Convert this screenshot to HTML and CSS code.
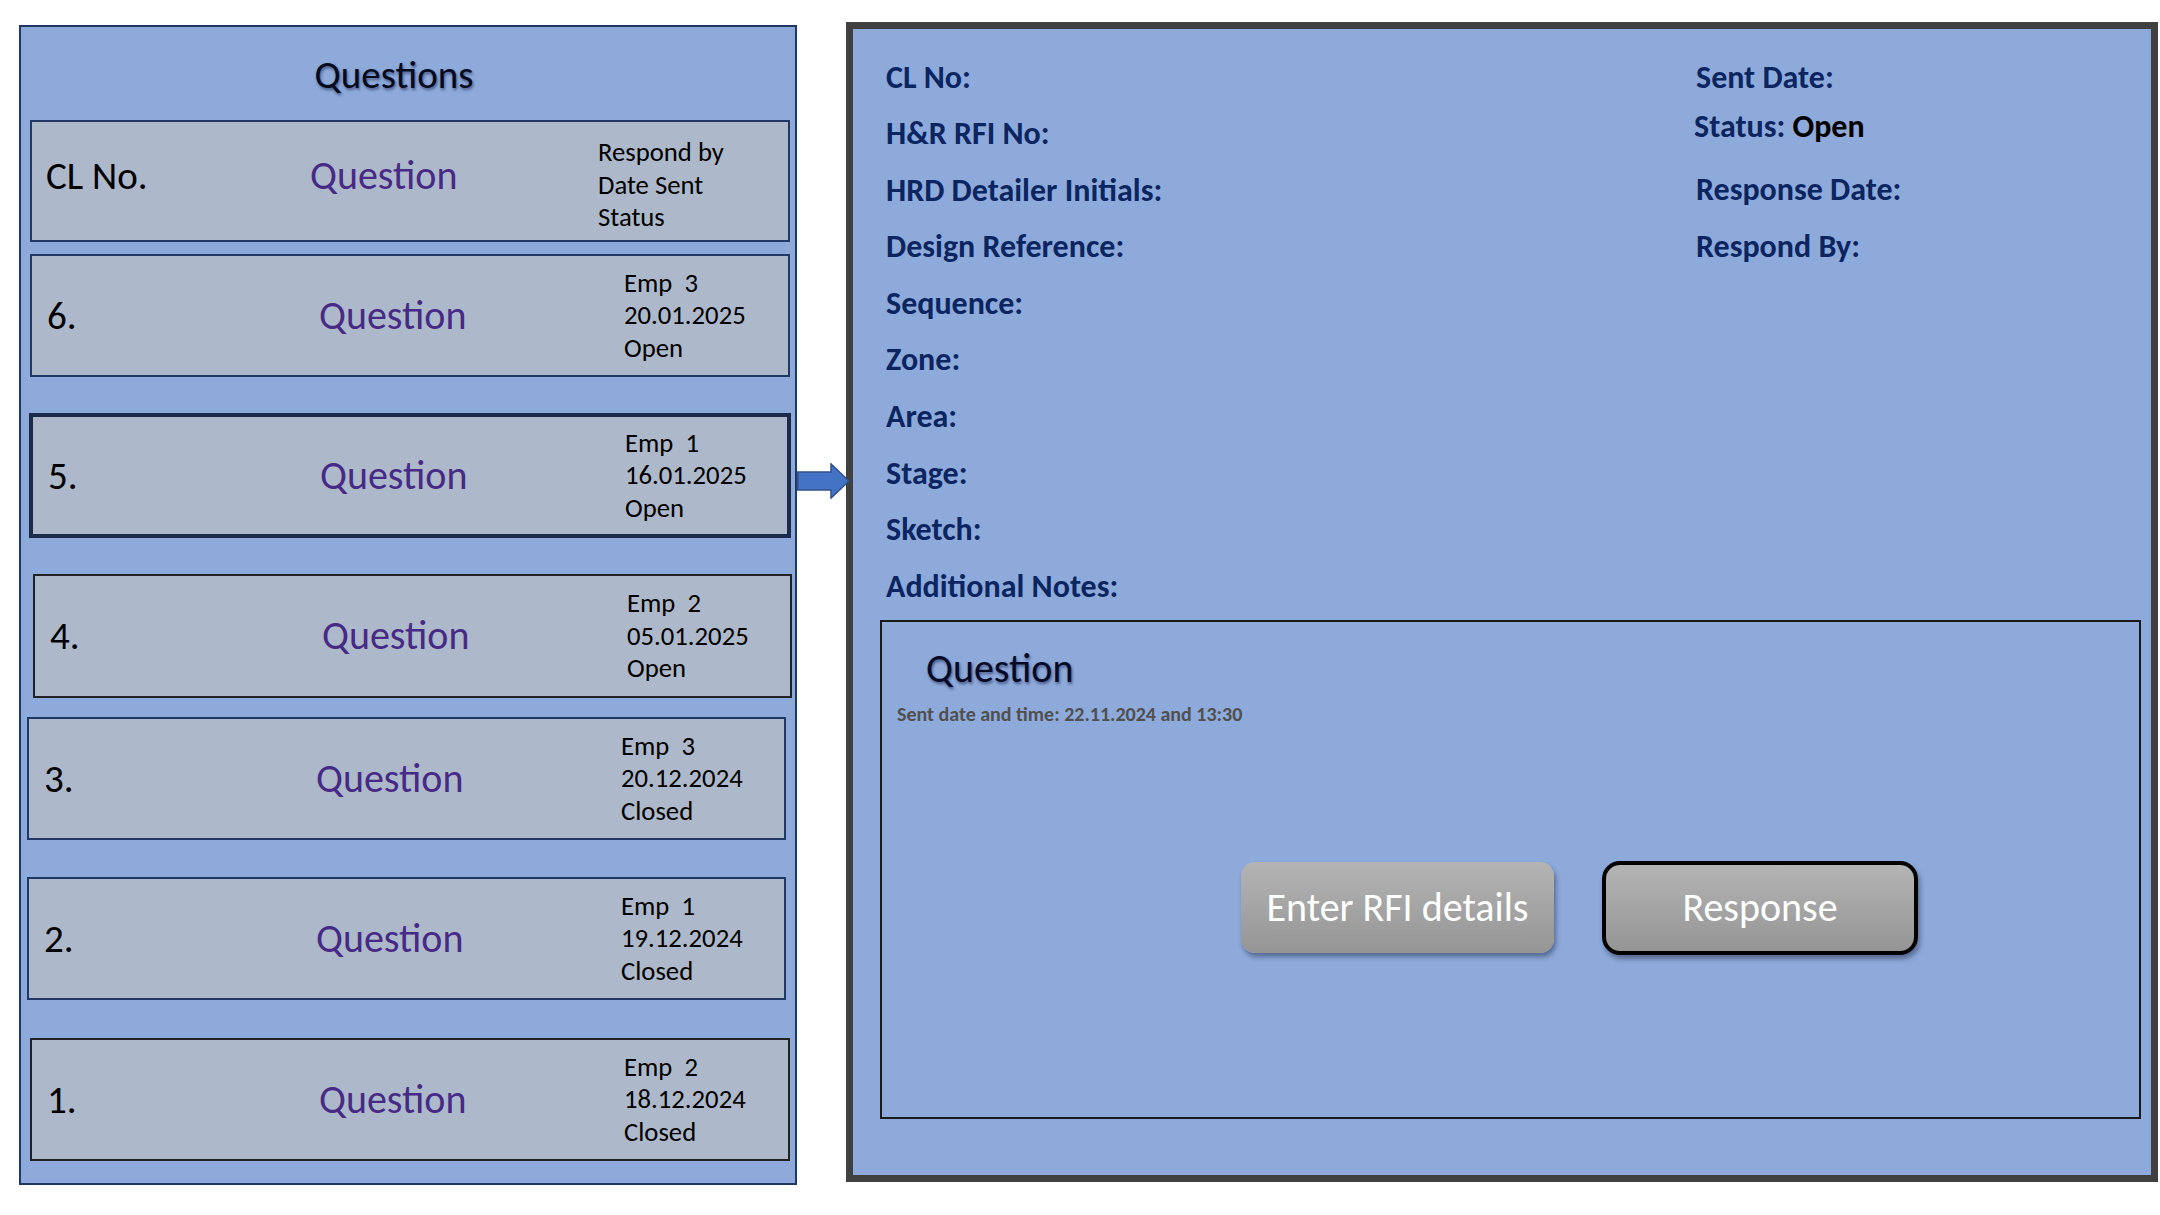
FILE: index.html
```html
<!DOCTYPE html>
<html lang="en">
<head>
<meta charset="utf-8">
<title>RFI Questions</title>
<link rel="stylesheet" href="styles.css">
</head>
<body>
<div class="page">
  <section class="list">
    <h1 class="list-title">Questions</h1>
    <div class="row head">
      <span class="num">CL No.</span>
      <span class="q">Question</span>
      <div class="meta"><span>Respond by</span><span>Date Sent</span><span>Status</span></div>
    </div>
    <div class="row r6">
      <span class="num">6.</span>
      <span class="q">Question</span>
      <div class="meta"><span>Emp  3</span><span>20.01.2025</span><span>Open</span></div>
    </div>
    <div class="row r5 selected">
      <span class="num">5.</span>
      <span class="q">Question</span>
      <div class="meta"><span>Emp  1</span><span>16.01.2025</span><span>Open</span></div>
    </div>
    <div class="row r4 dark">
      <span class="num">4.</span>
      <span class="q">Question</span>
      <div class="meta"><span>Emp  2</span><span>05.01.2025</span><span>Open</span></div>
    </div>
    <div class="row r3">
      <span class="num">3.</span>
      <span class="q">Question</span>
      <div class="meta"><span>Emp  3</span><span>20.12.2024</span><span>Closed</span></div>
    </div>
    <div class="row r2">
      <span class="num">2.</span>
      <span class="q">Question</span>
      <div class="meta"><span>Emp  1</span><span>19.12.2024</span><span>Closed</span></div>
    </div>
    <div class="row r1 dark">
      <span class="num">1.</span>
      <span class="q">Question</span>
      <div class="meta"><span>Emp  2</span><span>18.12.2024</span><span>Closed</span></div>
    </div>
  </section>

  <div class="arrow">
    <svg width="53" height="36" viewBox="0 0 53 36">
      <polygon points="0.75,9 34,9 34,0.9 52,18 34,35.1 34,27 0.75,27" fill="#4472c4" stroke="#2f528f" stroke-width="1.5" stroke-linejoin="miter"/>
    </svg>
  </div>

  <section class="detail">
    <div class="fields">
      <div class="col-left">
        <div class="label">CL No:</div>
        <div class="label">H&amp;R RFI No:</div>
        <div class="label">HRD Detailer Initials:</div>
        <div class="label">Design Reference:</div>
        <div class="label">Sequence:</div>
        <div class="label">Zone:</div>
        <div class="label">Area:</div>
        <div class="label">Stage:</div>
        <div class="label">Sketch:</div>
        <div class="label">Additional Notes:</div>
      </div>
      <div class="col-right">
        <div class="label">Sent Date:</div>
        <div class="label status">Status: <span class="value">Open</span></div>
        <div class="label response-date">Response Date:</div>
        <div class="label">Respond By:</div>
      </div>
    </div>
    <div class="qbox">
      <div class="qtitle">Question</div>
      <div class="sent">Sent date and time: 22.11.2024 and 13:30</div>
      <div class="actions">
        <button class="btn enter" type="button">Enter RFI details</button>
        <button class="btn response" type="button">Response</button>
      </div>
    </div>
  </section>
</div>
</body>
</html>
```
FILE: styles.css
```css
html, body {
  margin: 0;
  padding: 0;
  background: #ffffff;
}

body {
  font-family: "Carlito", "Lato", sans-serif;
  width: 2160px;
  height: 1215px;
  overflow: hidden;
}

.page {
  display: flex;
  align-items: flex-start;
  padding-left: 19px;
}

/* ---------- Left list panel ---------- */
.list {
  box-sizing: border-box;
  width: 778px;
  height: 1160px;
  margin-top: 25px;
  background: #8eaadb;
  border: 2px solid #1f3864;
  display: flex;
  flex-direction: column;
  align-items: flex-start;
}

.list-title {
  align-self: stretch;
  margin: 24px 0 0 0;
  padding-right: 28px;
  text-align: center;
  font-size: 39px;
  line-height: 48px;
  font-weight: normal;
  color: #050a1e;
  text-shadow: 1px 2px 3px rgba(10, 20, 60, 0.55);
}

.row {
  box-sizing: border-box;
  display: grid;
  grid-template-columns: 272px 305px auto;
  align-items: center;
  padding-left: 15px;
  background: #adb9ca;
  border: 2px solid #203864;
  width: 760px;
  height: 123px;
}

.row.dark { border-color: #222222; }
.row.selected { border: 4px solid #1b2b4a; }

.head {
  grid-template-columns: 264px 288px auto;
  padding-left: 14px;
  margin: 21px 0 0 9px;
  height: 122px;
}
.head .num,
.head .q { margin-bottom: 11px; }
.head .meta { padding-top: 8px; }

.r6 { margin: 12px 0 0 9px; }
.r5 { margin: 36px 0 0 8px; width: 762px; height: 125px; }
.r4 { margin: 36px 0 0 12px; width: 759px; height: 124px; }
.r3 { margin: 19px 0 0 6px; width: 759px; }
.r2 { margin: 37px 0 0 6px; width: 759px; }
.r1 { margin: 38px 0 0 9px; }

.num {
  font-size: 39px;
  line-height: 48px;
  color: #000000;
}

.q {
  font-size: 40px;
  line-height: 48px;
  color: #472a85;
}

.meta {
  display: flex;
  flex-direction: column;
  font-size: 26.7px;
  line-height: 32.5px;
  color: #000000;
  white-space: pre;
}

/* ---------- Arrow ---------- */
.arrow {
  position: relative;
  z-index: 2;
  width: 53px;
  height: 36px;
  margin-top: 463px;
  margin-right: -4px;
  flex-shrink: 0;
}
.arrow svg { display: block; }

/* ---------- Detail panel ---------- */
.detail {
  box-sizing: border-box;
  width: 1312px;
  height: 1160px;
  margin-top: 22px;
  background: #8eaadb;
  border: 7px solid #404040;
  display: flex;
  flex-direction: column;
}

.fields {
  display: grid;
  grid-template-columns: 810px auto;
  padding: 20.5px 0 0 33px;
}

.label {
  font-size: 32px;
  font-weight: bold;
  line-height: 56.6px;
  color: #0b2560;
  white-space: nowrap;
}

.status { margin-top: -7.5px; margin-left: -2px; }
.status .value { color: #000000; }
.response-date { margin-top: 7.3px; }

.qbox {
  box-sizing: border-box;
  margin: 4.4px 10px 0 27px;
  height: 499px;
  border: 2px solid #1a1a1a;
  display: flex;
  flex-direction: column;
}

.qtitle {
  margin-top: 23.5px;
  padding-left: 44px;
  font-size: 40px;
  line-height: 48px;
  color: #060a28;
  text-shadow: 1px 2px 3px rgba(10, 20, 60, 0.55);
}

.sent {
  margin-top: 8.5px;
  padding-left: 15px;
  font-size: 20px;
  line-height: 24px;
  font-weight: bold;
  color: #505050;
}

.actions {
  display: flex;
  align-items: center;
  gap: 48px;
  margin: 135px 0 0 359px;
}

.btn {
  box-sizing: border-box;
  font-family: "Carlito", "Lato", sans-serif;
  font-size: 40px;
  line-height: 48px;
  color: #ffffff;
  background: linear-gradient(#b4b4b4, #959595);
  border: none;
  padding: 0;
  text-align: center;
  box-shadow: 2px 4px 5px rgba(20, 30, 60, 0.45);
}

.enter {
  width: 313px;
  height: 91px;
  border-radius: 14px;
}

.response {
  width: 316px;
  height: 94px;
  border: 4px solid #000000;
  border-radius: 18px;
}
```
